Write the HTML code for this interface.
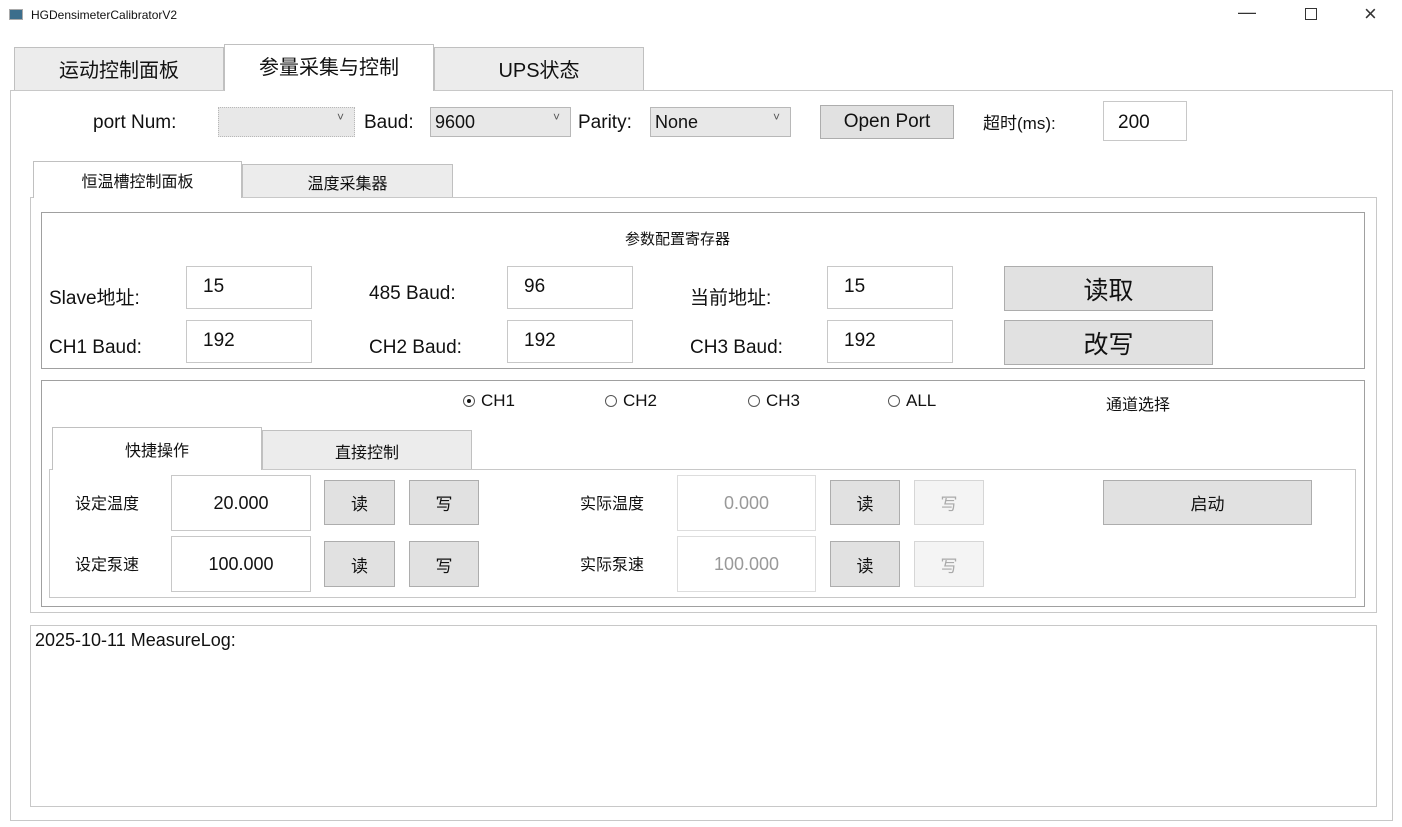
<!DOCTYPE html>
<html><head><meta charset="utf-8"><style>
*{box-sizing:border-box;margin:0;padding:0}
body{width:1402px;height:827px;background:#fff;position:relative;overflow:hidden;font-family:"Liberation Sans","Noto Sans CJK SC",sans-serif;color:#111}
.a{position:absolute;white-space:nowrap}
.b{position:absolute;border:1px solid #adadad}
.btn{position:absolute;background:#e1e1e1;border:1px solid #adadad;display:flex;align-items:center;justify-content:center}
.in{position:absolute;background:#fff;border:1px solid #c8c8c8;display:flex;align-items:center}
.tab{position:absolute;background:#ececec;border:1px solid #c0c0c0;border-bottom:none;display:flex;align-items:center;justify-content:center}
.act{background:#fff;z-index:2}
.cb{position:absolute;background:#e8e8e8;border:1px solid #b8b8b8;font-size:18px;padding-left:4px;display:flex;align-items:center}
.cb:after{content:"˅";position:absolute;right:10px;top:2px;font-size:12px;color:#555}
.rd{display:inline-block;width:12px;height:12px;border:1px solid #555;border-radius:50%;margin-right:6px;vertical-align:-1px;position:relative}
</style></head><body>
<div class="a" style="left:9px;top:9px;width:14px;height:11px;background:#3c6e8c;border:1px solid #aaa"></div>
<div class="a" style="left:31px;top:8px;font-size:12px">HGDensimeterCalibratorV2</div>
<div class="a" style="left:1238px;top:2px;font-size:18px;color:#333">—</div>
<div class="a" style="left:1305px;top:8px;width:12px;height:12px;border:1.5px solid #333"></div>
<div class="a" style="left:1364px;top:1px;font-size:22px;color:#333">×</div>

<div class="tab" style="left:14px;top:47px;width:210px;height:44px;font-size:20px;padding-bottom:3px">运动控制面板</div>
<div class="tab act" style="left:224px;top:44px;width:210px;height:47px;font-size:20px;padding-bottom:5px">参量采集与控制</div>
<div class="tab" style="left:434px;top:47px;width:210px;height:44px;font-size:20px;padding-bottom:3px">UPS状态</div>
<div class="b" style="left:10px;top:90px;width:1383px;height:731px;border-color:#c8c8c8"></div>

<div class="a" style="left:93px;top:112px;font-size:19px">port Num:</div>
<div class="cb" style="left:218px;top:107px;width:137px;height:30px;border-style:dotted"></div>
<div class="a" style="left:364px;top:112px;font-size:19px">Baud:</div>
<div class="cb" style="left:430px;top:107px;width:141px;height:30px">9600</div>
<div class="a" style="left:578px;top:112px;font-size:19px">Parity:</div>
<div class="cb" style="left:650px;top:107px;width:141px;height:30px">None</div>
<div class="btn" style="left:820px;top:105px;width:134px;height:34px;font-size:19px">Open Port</div>
<div class="a" style="left:983px;top:109px;font-size:17px">超时(ms):</div>
<div class="in" style="left:1103px;top:101px;width:84px;height:40px;font-size:19px;padding:4px 0 0 14px">200</div>

<div class="tab act" style="left:33px;top:161px;width:209px;height:37px;font-size:16px">恒温槽控制面板</div>
<div class="tab" style="left:242px;top:164px;width:211px;height:34px;font-size:16px">温度采集器</div>
<div class="b" style="left:30px;top:197px;width:1347px;height:416px;border-color:#c8c8c8"></div>

<div class="b" style="left:41px;top:212px;width:1324px;height:157px;border-color:#a0a0a0"></div>
<div class="a" style="left:625px;top:228px;font-size:15px">参数配置寄存器</div>
<div class="a" style="left:49px;top:283px;font-size:19px">Slave地址:</div>
<div class="in" style="left:186px;top:266px;width:126px;height:43px;font-size:19px;padding:0 0 2px 16px">15</div>
<div class="a" style="left:369px;top:283px;font-size:19px">485 Baud:</div>
<div class="in" style="left:507px;top:266px;width:126px;height:43px;font-size:19px;padding:0 0 2px 16px">96</div>
<div class="a" style="left:690px;top:283px;font-size:19px">当前地址:</div>
<div class="in" style="left:827px;top:266px;width:126px;height:43px;font-size:19px;padding:0 0 2px 16px">15</div>
<div class="btn" style="left:1004px;top:266px;width:209px;height:45px;font-size:25px">读取</div>
<div class="a" style="left:49px;top:337px;font-size:19px">CH1 Baud:</div>
<div class="in" style="left:186px;top:320px;width:126px;height:43px;font-size:19px;padding:0 0 2px 16px">192</div>
<div class="a" style="left:369px;top:337px;font-size:19px">CH2 Baud:</div>
<div class="in" style="left:507px;top:320px;width:126px;height:43px;font-size:19px;padding:0 0 2px 16px">192</div>
<div class="a" style="left:690px;top:337px;font-size:19px">CH3 Baud:</div>
<div class="in" style="left:827px;top:320px;width:126px;height:43px;font-size:19px;padding:0 0 2px 16px">192</div>
<div class="btn" style="left:1004px;top:320px;width:209px;height:45px;font-size:25px">改写</div>

<div class="b" style="left:41px;top:380px;width:1324px;height:227px;border-color:#a0a0a0"></div>
<div class="a" style="left:463px;top:391px;font-size:17px"><span class="rd"><span style="position:absolute;left:3px;top:3px;width:4px;height:4px;background:#111;border-radius:50%"></span></span>CH1</div>
<div class="a" style="left:605px;top:391px;font-size:17px"><span class="rd"></span>CH2</div>
<div class="a" style="left:748px;top:391px;font-size:17px"><span class="rd"></span>CH3</div>
<div class="a" style="left:888px;top:391px;font-size:17px"><span class="rd"></span>ALL</div>
<div class="a" style="left:1106px;top:391px;font-size:16px">通道选择</div>

<div class="tab act" style="left:52px;top:427px;width:210px;height:43px;font-size:16px">快捷操作</div>
<div class="tab" style="left:262px;top:430px;width:210px;height:40px;font-size:16px">直接控制</div>
<div class="b" style="left:49px;top:469px;width:1307px;height:129px;border-color:#c8c8c8"></div>

<div class="a" style="left:75px;top:490px;font-size:16px">设定温度</div>
<div class="in" style="left:171px;top:475px;width:140px;height:56px;font-size:18px;justify-content:center">20.000</div>
<div class="btn" style="left:324px;top:480px;width:71px;height:45px;font-size:17px">读</div>
<div class="btn" style="left:409px;top:480px;width:70px;height:45px;font-size:17px">写</div>
<div class="a" style="left:580px;top:490px;font-size:16px">实际温度</div>
<div class="in" style="left:677px;top:475px;width:139px;height:56px;font-size:18px;justify-content:center;color:#999;border-color:#ddd">0.000</div>
<div class="btn" style="left:830px;top:480px;width:70px;height:45px;font-size:17px">读</div>
<div class="btn" style="left:914px;top:480px;width:70px;height:45px;font-size:17px;background:#f4f4f4;border-color:#d6d6d6;color:#aaa">写</div>
<div class="btn" style="left:1103px;top:480px;width:209px;height:45px;font-size:17px">启动</div>

<div class="a" style="left:75px;top:551px;font-size:16px">设定泵速</div>
<div class="in" style="left:171px;top:536px;width:140px;height:56px;font-size:18px;justify-content:center">100.000</div>
<div class="btn" style="left:324px;top:541px;width:71px;height:46px;font-size:17px">读</div>
<div class="btn" style="left:409px;top:541px;width:70px;height:46px;font-size:17px">写</div>
<div class="a" style="left:580px;top:551px;font-size:16px">实际泵速</div>
<div class="in" style="left:677px;top:536px;width:139px;height:56px;font-size:18px;justify-content:center;color:#999;border-color:#ddd">100.000</div>
<div class="btn" style="left:830px;top:541px;width:70px;height:46px;font-size:17px">读</div>
<div class="btn" style="left:914px;top:541px;width:70px;height:46px;font-size:17px;background:#f4f4f4;border-color:#d6d6d6;color:#aaa">写</div>

<div class="b" style="left:30px;top:625px;width:1347px;height:182px;border-color:#c8c8c8"></div>
<div class="a" style="left:35px;top:630px;font-size:18px">2025-10-11 MeasureLog:</div>
</body></html>
